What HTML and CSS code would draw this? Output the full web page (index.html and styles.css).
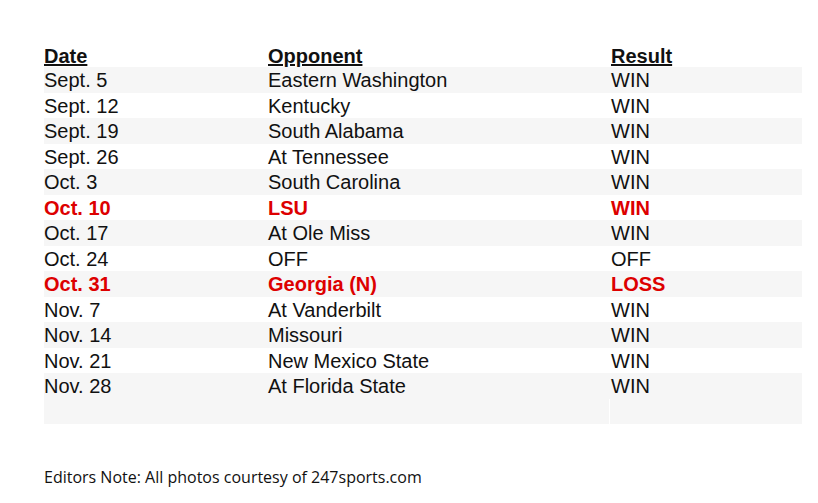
FILE: index.html
```html
<!DOCTYPE html>
<html>
<head>
<meta charset="utf-8">
<link rel="stylesheet" href="styles.css">
</head>
<body>
<div class="page">
  <div class="schedule">
    <div class="row head"><span>Date</span><span>Opponent</span><span>Result</span></div>
    <div class="row alt"><span>Sept. 5</span><span>Eastern Washington</span><span>WIN</span></div>
    <div class="row"><span>Sept. 12</span><span>Kentucky</span><span>WIN</span></div>
    <div class="row alt"><span>Sept. 19</span><span>South Alabama</span><span>WIN</span></div>
    <div class="row"><span>Sept. 26</span><span>At Tennessee</span><span>WIN</span></div>
    <div class="row alt"><span>Oct. 3</span><span>South Carolina</span><span>WIN</span></div>
    <div class="row hl"><span>Oct. 10</span><span>LSU</span><span>WIN</span></div>
    <div class="row alt"><span>Oct. 17</span><span>At Ole Miss</span><span>WIN</span></div>
    <div class="row"><span>Oct. 24</span><span>OFF</span><span>OFF</span></div>
    <div class="row alt hl"><span>Oct. 31</span><span>Georgia (N)</span><span>LOSS</span></div>
    <div class="row"><span>Nov. 7</span><span>At Vanderbilt</span><span>WIN</span></div>
    <div class="row alt"><span>Nov. 14</span><span>Missouri</span><span>WIN</span></div>
    <div class="row"><span>Nov. 21</span><span>New Mexico State</span><span>WIN</span></div>
    <div class="row alt"><span>Nov. 28</span><span>At Florida State</span><span>WIN</span></div>
    <div class="row alt empty"><span></span><span></span><span class="last"></span></div>
  </div>
  <p class="note">Editors Note: All photos courtesy of 247sports.com</p>
</div>
</body>
</html>
```
FILE: styles.css
```css
html, body {
  margin: 0;
  padding: 0;
  background: #ffffff;
}
.page {
  padding: 45px 16px 0 44px;
  width: 758px;
}
.schedule {
  display: flex;
  flex-direction: column;
  font-family: "Liberation Sans", Arial, sans-serif;
  font-size: 20px;
  color: #111111;
}
.row {
  display: grid;
  grid-template-columns: 224px 343px 191px;
  height: 25.5px;
  line-height: 25.5px;
}
.row span {
  padding-top: 1px;
  white-space: nowrap;
}
.row.head {
  height: 22px;
  line-height: 22px;
  font-weight: bold;
  text-decoration: underline;
}
.row.head span {
  padding-top: 0;
}
.row.alt {
  background: #f6f6f6;
}
.row.hl {
  color: #dd0000;
  font-weight: bold;
}
.row.empty .last {
  border-left: 1px solid #ffffff;
  margin-left: -2px;
}
.note {
  margin: 42px 0 0 0;
  font-family: "Open Sans", sans-serif;
  font-size: 16px;
  color: #111111;
}
```
